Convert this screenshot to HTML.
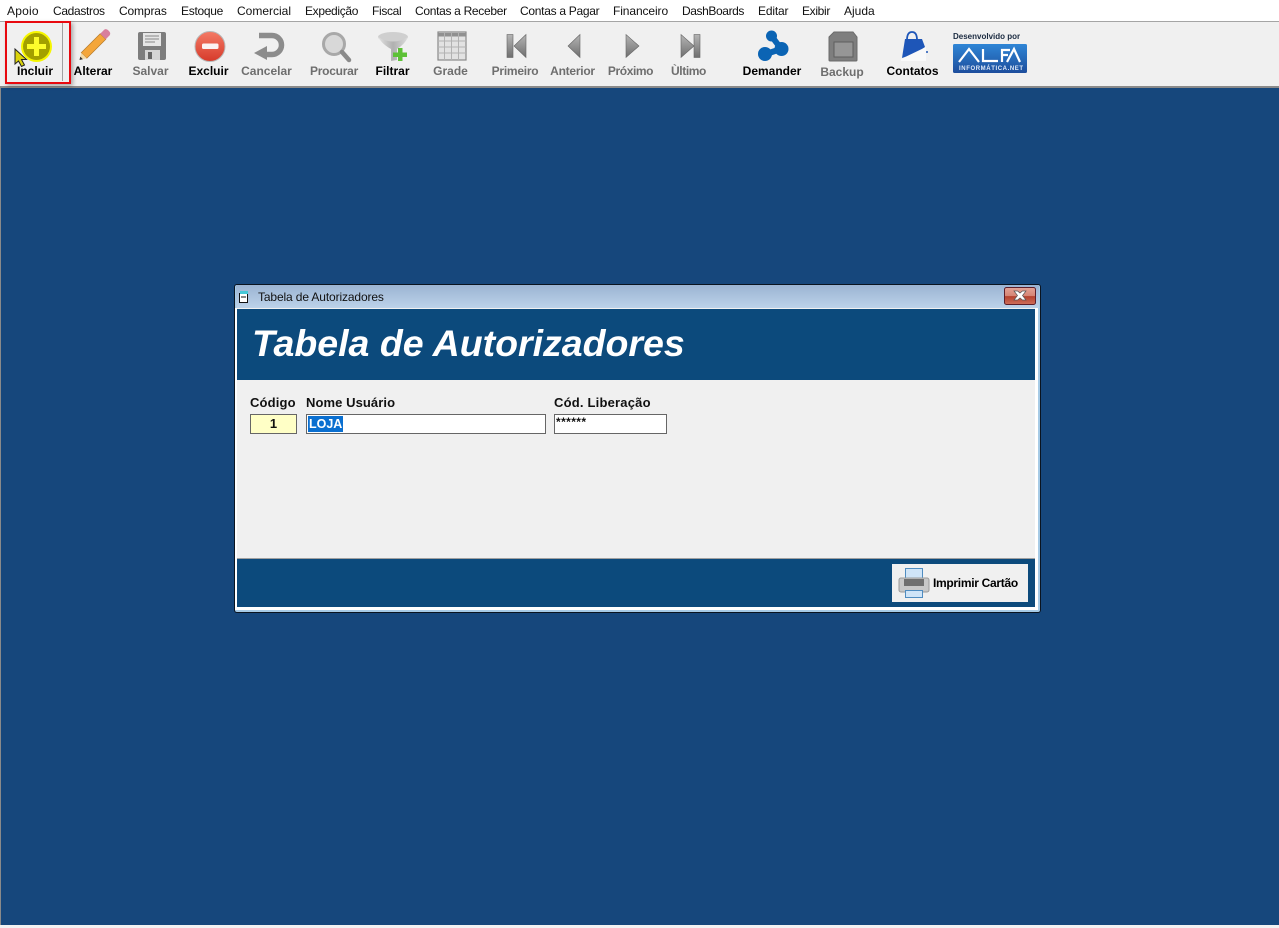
<!DOCTYPE html>
<html><head><meta charset="utf-8"><style>
html,body{margin:0;padding:0;width:1279px;height:928px;overflow:hidden;background:#fff}
body{position:relative;font-family:"Liberation Sans",sans-serif}
.a{position:absolute;white-space:nowrap}
.m{position:absolute;top:4px;font-size:12px;line-height:14px;color:#111;white-space:nowrap}
.l{position:absolute;top:64px;width:80px;text-align:center;font-size:12px;line-height:14px;font-weight:bold;white-space:nowrap;color:#000}
.g{color:#6e6e6e}
.f{position:absolute;top:395px;font-size:13px;line-height:15px;font-weight:bold;color:#111;white-space:nowrap}
.i{position:absolute;box-sizing:border-box;height:20px;top:414px;border:1px solid #666;background:#fff}
svg{position:absolute;left:0;top:0}
</style></head><body>
<div class="a" style="left:0;top:0;width:1279px;height:21px;background:#fff"></div>
<span class="m" style="left:7px;letter-spacing:.2px">Apoio</span><span class="m" style="left:53px;letter-spacing:-.33px">Cadastros</span><span class="m" style="left:119px;letter-spacing:-.14px">Compras</span><span class="m" style="left:181px;letter-spacing:-.28px">Estoque</span><span class="m" style="left:237px">Comercial</span><span class="m" style="left:305px;letter-spacing:-.33px">Expedição</span><span class="m" style="left:372px;letter-spacing:-.33px">Fiscal</span><span class="m" style="left:415px;letter-spacing:-.31px">Contas a Receber</span><span class="m" style="left:520px;letter-spacing:-.29px">Contas a Pagar</span><span class="m" style="left:613px;letter-spacing:-.1px">Financeiro</span><span class="m" style="left:682px;letter-spacing:-.4px">DashBoards</span><span class="m" style="left:758px;letter-spacing:-.17px">Editar</span><span class="m" style="left:802px;letter-spacing:-.33px">Exibir</span><span class="m" style="left:844px">Ajuda</span>
<div class="a" style="left:0;top:21px;width:1279px;height:1px;background:#a5a5a5"></div>
<div class="a" style="left:0;top:22px;width:1279px;height:64px;background:#f0f0f0"></div>
<div class="a" style="left:0;top:86px;width:1279px;height:2px;background:#8a8a8a"></div>
<div class="a" style="left:0;top:88px;width:1279px;height:837px;background:#16477c"></div>
<div class="a" style="left:0;top:88px;width:1px;height:837px;background:#8a8a8a"></div>
<div class="a" style="left:0;top:925px;width:1279px;height:3px;background:#f2f2f2"></div>

<div class="a" style="left:8px;top:23px;width:54px;height:58px;border-right:1px solid #a0a0a0"></div>
<div class="a" style="left:5px;top:21px;width:62px;height:59px;border:2px solid #e8090f;box-shadow:2px 2px 4px rgba(0,0,0,.3)"></div>

<span class="l" style="left:-5px">Incluir</span>
<span class="l" style="left:53px">Alterar</span>
<span class="l g" style="left:110.500px">Salvar</span>
<span class="l" style="left:168.500px">Excluir</span>
<span class="l g" style="left:226.500px">Cancelar</span>
<span class="l g" style="left:294px;letter-spacing:-.25px">Procurar</span>
<span class="l" style="left:352.500px">Filtrar</span>
<span class="l g" style="left:410.500px">Grade</span>
<span class="l g" style="left:475px;letter-spacing:-.25px">Primeiro</span>
<span class="l g" style="left:532.500px;letter-spacing:-.25px">Anterior</span>
<span class="l g" style="left:590.500px;letter-spacing:-.4px">Próximo</span>
<span class="l g" style="left:648.500px;letter-spacing:-.4px">Ùltimo</span>
<span class="l" style="left:732px">Demander</span>
<span class="l g" style="left:802px;top:65px">Backup</span>
<span class="l" style="left:872.500px">Contatos</span>
<span class="a" style="left:953px;top:32px;font-size:8px;line-height:10px;font-weight:bold;color:#1a2a40">Desenvolvido por</span>

<svg width="1279" height="928" viewBox="0 0 1279 928">
<defs>
<linearGradient id="gy" x1="0" y1="0" x2="0" y2="1"><stop offset="0" stop-color="#b5b5b5"/><stop offset="1" stop-color="#6f6f6f"/></linearGradient>
<linearGradient id="alfa" x1="0" y1="0" x2="0" y2="1"><stop offset="0" stop-color="#2f86d6"/><stop offset="1" stop-color="#1d4d9c"/></linearGradient>
<linearGradient id="red" x1="0" y1="0" x2="0" y2="1"><stop offset="0" stop-color="#f47a66"/><stop offset="1" stop-color="#d63a2a"/></linearGradient>
<linearGradient id="cl" x1="0" y1="0" x2="0" y2="1"><stop offset="0" stop-color="#e4a396"/><stop offset=".5" stop-color="#d58474"/><stop offset=".52" stop-color="#b3402c"/><stop offset="1" stop-color="#d0705c"/></linearGradient>
<linearGradient id="fun" x1="0" y1="0" x2="1" y2="0"><stop offset="0" stop-color="#e2e2e2"/><stop offset=".5" stop-color="#b0b0b0"/><stop offset="1" stop-color="#dcdcdc"/></linearGradient>
</defs>
<!-- Incluir -->
<circle cx="36.500" cy="46.500" r="15.500" fill="#f6f600"/><circle cx="36.500" cy="46.500" r="13.500" fill="#a3a000"/>
<path d="M34 37h5v7h7v5h-7v7h-5v-7h-7v-5h7z" fill="#fdfd2c"/>
<path d="M15 49v15l3.500-3 3 5.500 3-1.500-3-5.500h5z" fill="#dcd40c" stroke="#222" stroke-width="1"/>
<!-- Alterar -->
<path d="M81.200 52.700L100.200 33.700l5.600 5.600L86.800 58.300z" fill="#f4a63a" stroke="#b57a2a" stroke-width=".7"/>
<path d="M100.200 33.700l4-4q2-1.500 4.500 1t1 4.500l-3.900 4.100z" fill="#d87f9c"/><path d="M79.500 60l1.700-7.300 5.600 5.600z" fill="#f3d9a6"/><path d="M79.500 60l.8-3.400 2.600 2.600z" fill="#333"/>
<!-- Salvar -->
<rect x="138" y="32" width="28" height="28" rx="2" fill="#7d7d7d"/><rect x="143" y="33" width="18" height="13" fill="#e6e6e6"/>
<path d="M145 36h14M145 39h14M145 42h10" stroke="#888" stroke-width="1"/><rect x="145" y="50" width="15" height="10" fill="#d5d5d5"/><rect x="148" y="52" width="4" height="7" fill="#666"/>
<!-- Excluir -->
<circle cx="210" cy="46.500" r="15" fill="url(#red)" stroke="#b8b8b8" stroke-width="1"/><rect x="202" y="43.500" width="16.500" height="5.500" rx="1.500" fill="#fbf2f2"/>
<!-- Cancelar -->
<path d="M259 35.500h13a9.500 9.500 0 0 1 0 19h-7" fill="none" stroke="#8c8c8c" stroke-width="5.500"/>
<path d="M267 46v14l-13-7z" fill="#8c8c8c"/>
<!-- Procurar -->
<circle cx="334" cy="44" r="10.500" fill="#d8d8d8" stroke="#a8a8a8" stroke-width="3"/><path d="M342 52l7 8" stroke="#8a8a8a" stroke-width="4.500" stroke-linecap="round"/>
<!-- Filtrar -->
<ellipse cx="393" cy="37" rx="15" ry="5" fill="#cfcfcf"/><path d="M378 37q15 9 30 0q-3 7-11 12v11l-6 1V49q-9-5-13-12z" fill="url(#fun)"/>
<path d="M398 48h4.500v4.500h4.500v4.500h-4.500v4h-4.500v-4h-5v-4.500h5z" fill="#5dc136"/>
<!-- Grade -->
<rect x="438" y="32" width="28" height="28" fill="#e2e2e2" stroke="#8a8a8a" stroke-width="1.200"/><rect x="438" y="33" width="28" height="3.500" fill="#909090"/>
<path d="M444.500 33v27M451.500 33v27M458.500 33v27M438 41h28M438 47h28M438 53h28" stroke="#b2b2b2" stroke-width="1" fill="none"/>
<!-- Nav -->
<rect x="507" y="34.500" width="6" height="23" fill="url(#gy)" stroke="#666" stroke-width=".6"/><path d="M526 34.500v23l-12-11.500z" fill="url(#gy)" stroke="#666" stroke-width=".6"/>
<path d="M580 34.500v23l-12-11.500z" fill="url(#gy)" stroke="#666" stroke-width=".6"/>
<path d="M626 34.500v23l13-11.500z" fill="url(#gy)" stroke="#666" stroke-width=".6"/>
<path d="M681 34.500v23l13-11.500z" fill="url(#gy)" stroke="#666" stroke-width=".6"/><rect x="694" y="34.500" width="6" height="23" fill="url(#gy)" stroke="#666" stroke-width=".6"/>
<!-- Demander -->
<path d="M771.500 36l9 12M781 49l-15 5" stroke="#0b64b4" stroke-width="6"/><circle cx="771.500" cy="36" r="5.500" fill="#0b64b4"/><circle cx="781.500" cy="49" r="7" fill="#0b64b4"/><circle cx="765" cy="54" r="7" fill="#0b64b4"/>
<!-- Backup -->
<path d="M829 37l5-5h19l4 5v23q0 1-1 1h-26q-1 0-1-1z" fill="#7e7e7e" stroke="#6b6b6b"/><rect x="834" y="42" width="19" height="15" fill="#969696" stroke="#5e5e5e"/>
<!-- Contatos -->
<path d="M907 40q0-8 5-8t5 8" fill="none" stroke="#1e56b8" stroke-width="1.800"/>
<path d="M905 39h17l3 8q-9 7-23 11z" fill="#1e56b8"/><path d="M901 59l25-12v14h-25z" fill="#f9f9f9"/><circle cx="927" cy="52" r="1" fill="#1e56b8"/>
<!-- Alfa -->
<rect x="953" y="44" width="74" height="29" rx="1.500" fill="url(#alfa)"/>
<path d="M959 62l10-13 10 13M983 49v12h15M1002 62V50h8M1002 55h6M1007 62l7-13 6 13" fill="none" stroke="#fff" stroke-width="2.200"/>
<!-- Window -->
<rect x="234" y="284" width="807" height="329" rx="3" fill="#0a1420"/>
<rect x="235" y="285" width="805" height="327" rx="2" fill="#a7cbe6"/>
</svg>
<div class="a" style="left:236px;top:285px;width:803px;height:23px;background:linear-gradient(#9bb4d2,#bcd2e9)"></div>
<div class="a" style="left:237px;top:308px;width:798px;height:299px;background:#f0f0f0"></div>
<div class="a" style="left:235px;top:308px;width:2px;height:302px;background:#fff"></div>
<div class="a" style="left:1035px;top:308px;width:3px;height:302px;background:#fff"></div>
<div class="a" style="left:235px;top:607px;width:803px;height:3px;background:#fff"></div>
<div class="a" style="left:237px;top:309px;width:798px;height:71px;background:#0c4a7c"></div>
<div class="a" style="left:237px;top:558px;width:798px;height:1px;background:#a0a0a0"></div>
<div class="a" style="left:237px;top:559px;width:798px;height:48px;background:#0c4a7c"></div>
<span class="a" style="left:258px;top:290px;font-size:12px;line-height:14px;color:#111;letter-spacing:-.13px">Tabela de Autorizadores</span>
<svg width="1279" height="928" viewBox="0 0 1279 928">
<rect x="239.500" y="293.500" width="8" height="9" fill="#fff" stroke="#111"/><rect x="240" y="291" width="8" height="3" fill="#45c8d8"/><path d="M241 297h5" stroke="#111"/>
<rect x="1004.500" y="287.500" width="31" height="17" rx="2" fill="url(#cl)" stroke="#5c1f2a"/>
<path d="M1014 291h3.500l2.500 2 2.500-2h3.500l-3.500 4.500 3.500 4.500h-3.500l-2.500-2-2.500 2h-3.500l3.500-4.500z" fill="#fff" stroke="#555" stroke-width=".7"/>
</svg>
<span class="a" style="left:252px;top:322px;font-size:37.500px;line-height:42px;font-weight:bold;font-style:italic;color:#fff">Tabela de Autorizadores</span>

<span class="f" style="left:250px;letter-spacing:.15px">Código</span>
<span class="f" style="left:306px;letter-spacing:.08px">Nome Usuário</span>
<span class="f" style="left:554px;letter-spacing:.2px">Cód. Liberação</span>
<div class="i" style="left:250px;width:47px;background:#ffffc6;text-align:center;font-size:13px;line-height:18px;font-weight:bold;color:#111">1</div>
<div class="i" style="left:306px;width:240px"><span class="a" style="left:1px;top:1px;height:16px;padding:0 1px;background:#0a6fd0;color:#fff;font-size:12.500px;line-height:17px;font-weight:bold">LOJA</span></div>
<div class="i" style="left:554px;width:113px;font-size:12px;line-height:14px;font-weight:bold;color:#111;padding-left:1px;letter-spacing:.4px">******</div>

<div class="a" style="left:892px;top:564px;width:136px;height:38px;background:#f0f0f0"></div>
<svg width="1279" height="928" viewBox="0 0 1279 928">
<rect x="905.500" y="568.500" width="17" height="11" fill="#cfe4f7" stroke="#4f8cc0"/>
<rect x="899" y="578" width="30" height="14" rx="2" fill="#c8c8c8" stroke="#9a9a9a"/><rect x="904" y="579" width="20" height="7" fill="#6f6f6f"/>
<rect x="905.500" y="590.500" width="17" height="7" fill="#cfe4f7" stroke="#4f8cc0"/>
</svg>
<span class="a" style="left:933px;top:576px;font-size:12px;line-height:14px;font-weight:bold;color:#000;letter-spacing:-.3px">Imprimir Cartão</span>
<span class="a" style="left:959px;top:66px;font-size:6px;line-height:6px;font-weight:bold;color:#dfeaf8;letter-spacing:.6px">INFORMÁTICA.NET</span>
</body></html>
